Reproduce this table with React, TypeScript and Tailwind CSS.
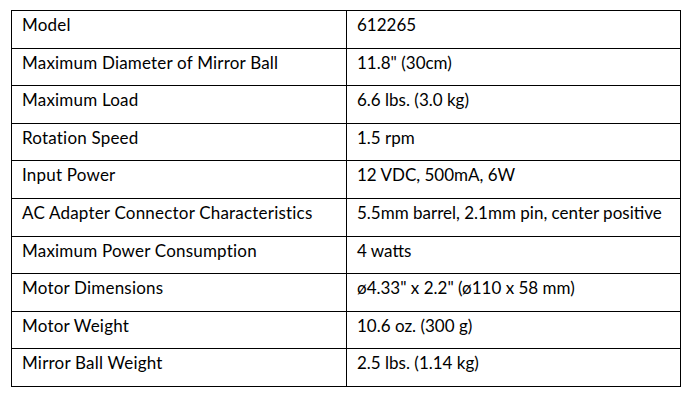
import React from "react";

const rows: [string, string][] = [
  ["Model", "612265"],
  ["Maximum Diameter of Mirror Ball", "11.8\" (30cm)"],
  ["Maximum Load", "6.6 lbs. (3.0 kg)"],
  ["Rotation Speed", "1.5 rpm"],
  ["Input Power", "12 VDC, 500mA, 6W"],
  ["AC Adapter Connector Characteristics", "5.5mm barrel, 2.1mm pin, center positive"],
  ["Maximum Power Consumption", "4 watts"],
  ["Motor Dimensions", "ø4.33\" x 2.2\" (ø110 x 58 mm)"],
  ["Motor Weight", "10.6 oz. (300 g)"],
  ["Mirror Ball Weight", "2.5 lbs. (1.14 kg)"],
];

export default function App() {
  return (
    <div className="w-[692px] h-[401px] bg-white pl-[11px] pt-[10px]" style={{ fontFamily: 'Lato, sans-serif' }}>
      <table className="border-collapse w-[670px] text-[17px] leading-[22px] text-black">
        <tbody>
          {rows.map(([k, v]) => (
            <tr key={k} className="h-[37.6px]">
              <td className="border-[1.5px] border-black align-top pl-[10px] pt-[3px] w-[335px] tracking-[0.2px]">{k}</td>
              <td className="border-[1.5px] border-black align-top pl-[10px] pt-[3px]">{v}</td>
            </tr>
          ))}
        </tbody>
      </table>
    </div>
  );
}
